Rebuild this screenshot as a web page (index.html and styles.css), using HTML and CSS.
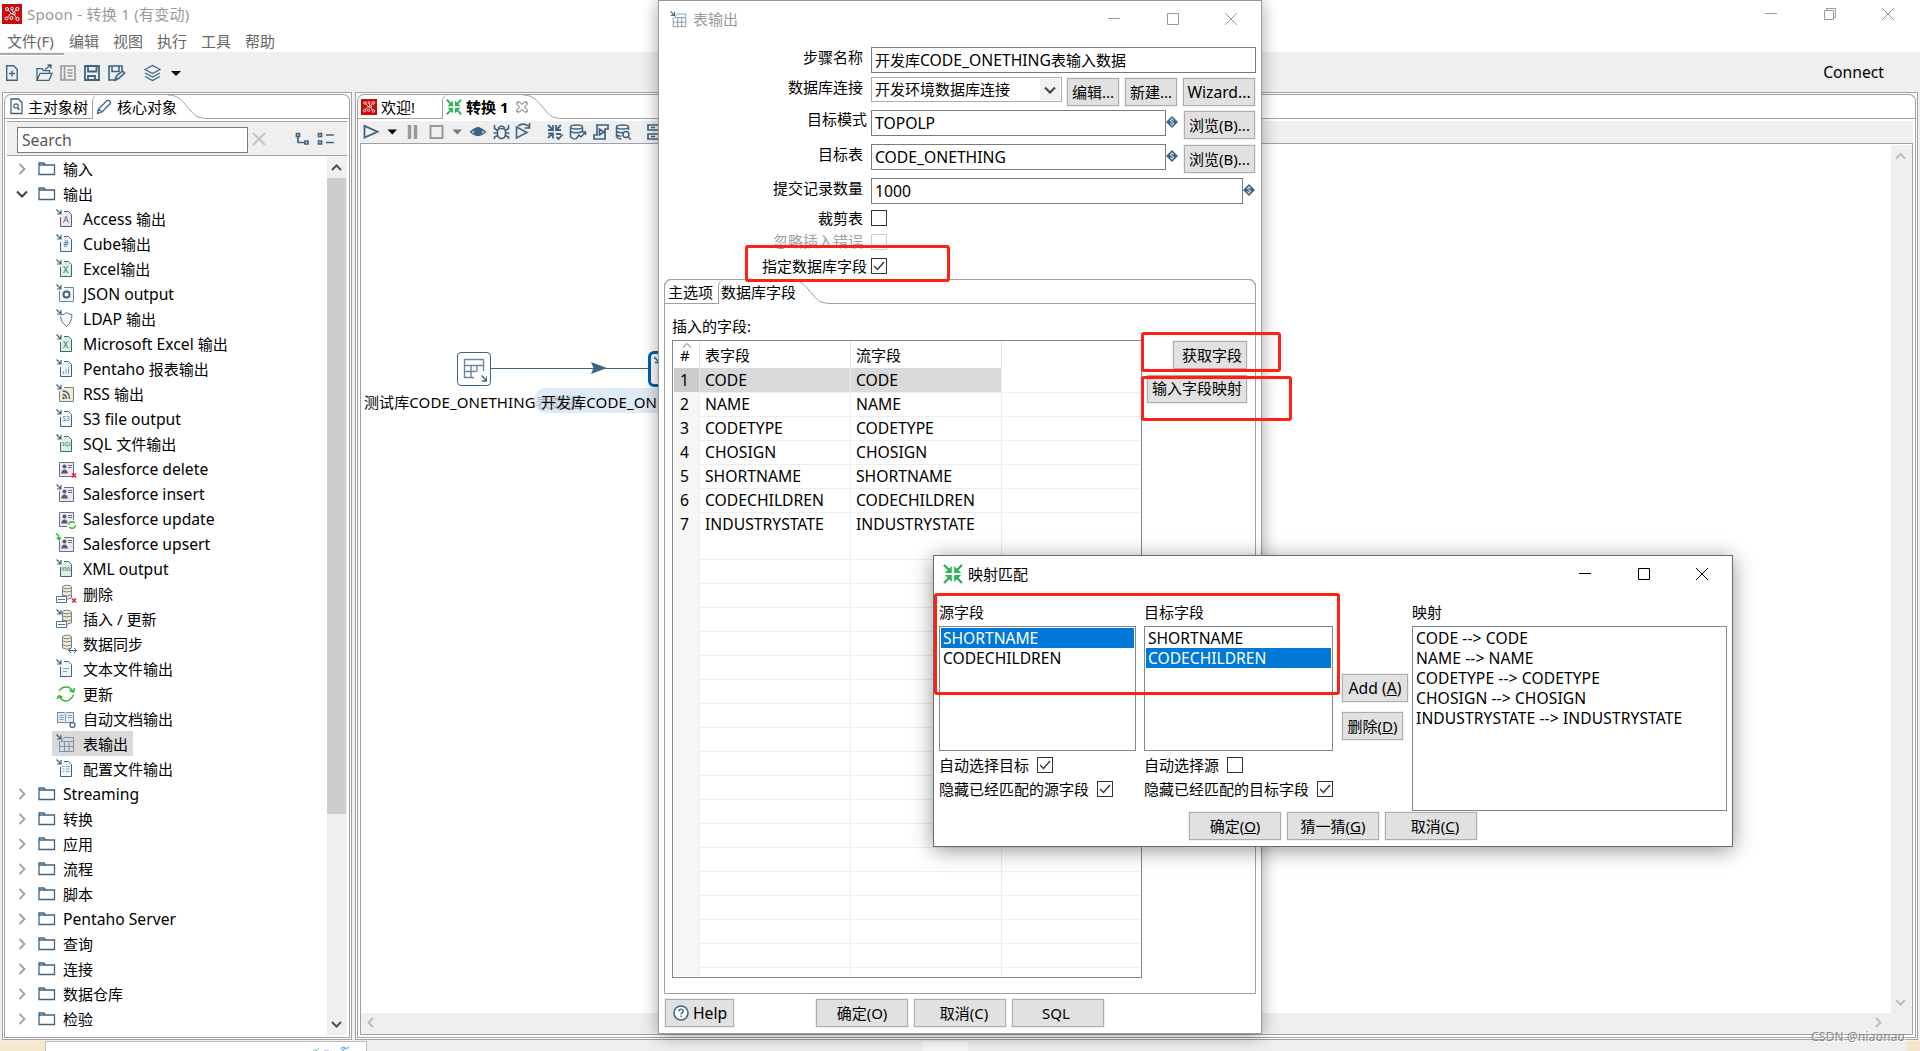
FILE: index.html
```
<!DOCTYPE html>
<html lang="zh-CN">
<head>
    <meta charset="UTF-8">
    <title>Spoon - 转换 1 (有变动)</title>
    <link rel="stylesheet" href="styles.css">
</head>
<body>
    <!-- Icon set -->
    <svg class="defs" width="0" height="0">
        <symbol id="logo" viewBox="0 0 20 20">
            <rect width="20" height="20" fill="#cc0a0a"/>
            <g fill="none" stroke="#fff" stroke-width="1"><circle cx="5" cy="5" r="1.5"/><circle cx="10" cy="4.5" r="1.3"/><circle cx="15.3" cy="5" r="1.6"/><circle cx="4.5" cy="14.5" r="1.5"/><circle cx="15.5" cy="15" r="1.6"/><circle cx="9.5" cy="14" r="1.5"/><circle cx="12" cy="9.5" r="1.3"/><path d="M6 6l4 4M10 6l1.5 2.500M14 6l-2 2.500M5.500 13.500l3-4 3 .5M14.500 14l-2-3"/></g>
        </symbol>
        <symbol id="trans" viewBox="0 0 20 20">
            <g stroke="#2fb457" stroke-width="2.400" fill="#2fb457"><path d="M1 1l6 6M19 1l-6 6M1 19l6-6M19 19l-6-6"/><path stroke="none" d="M8.800 2v7H1.800zM11.200 2v7h7zM8.800 18v-7H1.800zM11.200 18v-7h7z"/></g>
        </symbol>
        <symbol id="folder" viewBox="0 0 18 14"><path d="M1 2.500V1h5l1.500 2M1 1v11.500h15.500V3H1" stroke="#3d6482" stroke-width="1.300" fill="none"/></symbol>
        <symbol id="right" viewBox="0 0 8 12"><path d="M1.500 1L6.500 6l-5 5" stroke="#a0a0a0" stroke-width="1.800" fill="none"/></symbol>
        <symbol id="down" viewBox="0 0 12 8"><path d="M1 1.500l5 5 5-5" stroke="#404040" stroke-width="2" fill="none"/></symbol>
        <symbol id="arr" viewBox="0 0 22 22"><path d="M0.500 1.500l4 4M5 2v4H1" stroke="#3d6482" stroke-width="1.200" fill="none"/></symbol>
        <symbol id="doc" viewBox="0 0 22 22"><path d="M4.500 9v9.500h11V6.500l-3-3H8" stroke="#3d6482"/></symbol>
        <symbol id="card" viewBox="0 0 22 22"><path d="M3.500 8v10.500h14v-14H8" stroke="#54768f" fill="#fbe3e6"/><circle cx="8.500" cy="8.500" r="2" fill="#3d6482"/><path d="M5 15.500q1-4 3.500-4t3.500 4z" fill="#3d6482"/><path d="M12 7.500h4M12 9.500h4" stroke="#54768f"/></symbol>
        <symbol id="db" viewBox="0 0 22 22"><path d="M6.500 4v11q4.500 2.500 9 0V4" fill="#fce8cb" stroke="#6b879c"/><ellipse cx="11" cy="4" rx="4.500" ry="1.800" fill="#fce8cb" stroke="#6b879c"/><path d="M6.500 8q4.500 2 9 0M6.500 12q4.500 2 9 0" fill="none" stroke="#6b879c"/></symbol>
        <symbol id="rows" viewBox="0 0 22 22"><path d="M.5 13.500h10v6H.5zM2 16.500h7" fill="#fff" stroke="#54768f"/></symbol>
        <symbol id="del" viewBox="0 0 22 22"><path d="M16 15.500l4 4M20 15.500l-4 4" stroke="#e8174b" stroke-width="1.500"/></symbol>
        <symbol id="grid" viewBox="0 0 22 22"><path d="M3.500 8.500v10h14v-14H8l-3 4h12.500M3.500 13.500h14M8.500 8.500v10M13 8.500v10" fill="none" stroke="#7b93a6"/></symbol>
        <symbol id="var" viewBox="0 0 12 12"><path d="M6 0l6 6-6 6-6-6z" fill="#3d6482"/><path d="M7.800 4.300Q6 3 4.800 4T6 6t1.200 2T4.200 7.700M6 2.300v1.200M6 8.500v1.200" stroke="#fff" fill="none" stroke-width=".9"/></symbol>
        <symbol id="check" viewBox="0 0 14 14"><path d="M2 7l3.500 3.500L12 3" stroke="#333" stroke-width="1.400" fill="none"/></symbol>
        <symbol id="min" viewBox="0 0 12 12"><path d="M0 5.500h12" stroke="currentColor"/></symbol>
        <symbol id="max" viewBox="0 0 12 12"><path d="M.5.5h11v11H.5z" stroke="currentColor" fill="none"/></symbol>
        <symbol id="close" viewBox="0 0 12 12"><path d="M0 0l12 12M12 0L0 12" stroke="currentColor"/></symbol>
        <symbol id="curve" viewBox="0 0 36 24"><path d="M0 .5C10 .5 14 6 20 13S28 23.500 36 23.500" stroke="#a0a0a0" fill="none"/></symbol>
    </svg>

    <div class="titlebar">
        <svg width="20" height="20"><use href="#logo"/></svg>
        <span class="title">Spoon - 转换 1 (有变动)</span>
        <div class="winbtns">
            <svg width="12" height="12"><use href="#min"/></svg>
            <svg width="12" height="12"><path d="M.5 2.500h9v9h-9zM2.500 2V.5h9v9H10" stroke="currentColor" fill="none"/></svg>
            <svg width="12" height="12"><use href="#close"/></svg>
        </div>
    </div>
    <div class="menubar">
        <span class="file">文件(F)</span><span>编辑</span><span>视图</span><span>执行</span><span>工具</span><span>帮助</span>
    </div>
    <div class="toolbar">
        <svg class="ic" width="180" height="18">
            <path d="M.7 1.700h7l3.500 3.500v11H.7zM6 6.500v6M3 9.500h6" stroke-width="1.400"/>
            <path d="M31 16.300V4.700h5l1.500 2h6v2.500M31 16.300l3-7h12l-3 7zM39 5.500l6-4.500M41.500 1H45v3.500" stroke-width="1.300"/>
            <path d="M55 2h14v14H55zM58.500 2v14M61.500 6h5M61.500 9h5M61.500 12h5" stroke="#999" stroke-width="1.600"/>
            <path d="M79 2h14v14H79zM82 2v5.500h8.500V2M82 16v-4h7v4" stroke-width="1.800"/>
            <path d="M111 16h-8V2h13v6M106 2v5.500h7V2M109 16l1.500-4 6-5 2 2-6 5.500z" stroke-width="1.600"/>
            <path d="M139 5.500l7.500-4 7.500 4-7.500 4zM139 9l7.500 4 7.500-4M139 12.500l7.500 4 7.500-4" stroke-width="1.200"/>
            <path d="M165 7h10l-5 5z" fill="#000" stroke="none"/>
        </svg>
        <span class="connect en">Connect</span>
    </div>

    <div class="workspace">
        <div class="panel side">
            <div class="tabs">
                <div class="tab t-tree"><svg class="ic" width="14" height="17"><path d="M1 1h7.500L12 4.500V15.500H1z" stroke-width="1.300"/><circle cx="6" cy="8" r="2.200" stroke-width="1.200"/><path d="M7.500 9.500l2 2.500" stroke-width="1.300"/></svg>主对象树</div>
                <div class="tab active"><svg class="ic" width="16" height="16"><path d="M1.500 14.500l1-4.500 8.500-8.500q2-.5 3 .8 1 1.200.3 2.200L6 13zM2.500 10L6 13" stroke-width="1.300"/></svg>核心对象</div>
                <svg class="curve" width="36" height="24"><use href="#curve"/></svg>
                <div class="fill"></div>
            </div>
            <div class="pane">
                <div class="search">
                    <div class="searchbox">Search</div>
                    <svg width="14" height="14"><path d="M1 1l12 12M13 1L1 13" stroke="#c4c4c4" stroke-width="2"/></svg>
                    <svg class="ic expand" width="40" height="14"><path d="M1.500 1.500h3v3h-3zM10 9h3v3h-3zM3 5v5.500h6.500" stroke-width="1.700"/><path d="M23.500 1.500h3v3h-3zM23.500 9h3v3h-3zM31 3h8M31 10.500h8" stroke-width="1.700"/></svg>
                </div>
                <div class="tree-wrap">
                    <div class="tree">
                        <div class="folder"><svg class="tw" width="8" height="12"><use href="#right"/></svg><svg width="18" height="14"><use href="#folder"/></svg>输入</div>
                        <div class="folder open"><svg class="tw" width="12" height="8"><use href="#down"/></svg><svg width="18" height="14"><use href="#folder"/></svg>输出</div>
                        <div class="leaf"><svg width="22" height="22"><use href="#arr"/><use href="#doc" fill="#fbe3e6"/><text x="7" y="15">A</text></svg><span class="en">Access&nbsp;</span>输出</div>
                        <div class="leaf"><svg width="22" height="22"><use href="#arr"/><use href="#doc" fill="#eef6fb"/><text x="7" y="14">#</text></svg><span class="en">Cube</span>输出</div>
                        <div class="leaf"><svg width="22" height="22"><use href="#arr"/><use href="#doc" fill="#d9f2d9"/><text x="7" y="15">X</text></svg><span class="en">Excel</span>输出</div>
                        <div class="leaf"><svg width="22" height="22"><use href="#arr"/><path d="M3.500 8v10.500h14v-14H8" stroke="#6b879c" fill="#eef6fb"/><circle cx="10.500" cy="11.500" r="3" stroke="#3d6482" stroke-width="2" fill="#fff"/></svg><span class="en">JSON output</span></div>
                        <div class="leaf"><svg width="22" height="22"><use href="#arr"/><path d="M4.500 7q4 0 6-2.500 2.500 2 5.500 2-.5 9-5.500 12-6-4-6-10" stroke="#54768f" fill="#f5fafd"/></svg><span class="en">LDAP&nbsp;</span>输出</div>
                        <div class="leaf"><svg width="22" height="22"><use href="#arr"/><use href="#doc" fill="#d9f2d9"/><text x="7" y="15">X</text></svg><span class="en">Microsoft Excel&nbsp;</span>输出</div>
                        <div class="leaf"><svg width="22" height="22"><use href="#arr"/><use href="#doc" fill="#eef6fb"/><path d="M7.500 16v-3M10 16v-5M12.500 16v-7" stroke="#8aa3b5"/></svg><span class="en">Pentaho&nbsp;</span>报表输出</div>
                        <div class="leaf"><svg width="22" height="22"><use href="#arr"/><path d="M3.500 8v10.500h14v-14H8" stroke="#6b879c" fill="#fce8cb"/><path d="M6.500 8q7 0 7 8M6.500 11.500q4 0 4 4.500" stroke="#3d6482" stroke-width="1.400" fill="none"/><circle cx="7.500" cy="15" r="1.200" fill="#3d6482"/></svg><span class="en">RSS&nbsp;</span>输出</div>
                        <div class="leaf"><svg width="22" height="22"><use href="#arr"/><use href="#doc" fill="#f5fafd"/><text class="tiny" x="6.500" y="13">S3</text></svg><span class="en">S3 file output</span></div>
                        <div class="leaf"><svg width="22" height="22"><use href="#arr"/><use href="#doc" fill="#d9f2d9"/><text class="mini" x="6" y="13">SQL</text></svg><span class="en">SQL&nbsp;</span>文件输出</div>
                        <div class="leaf"><svg width="22" height="22"><use href="#card"/><path d="M3.500 8V4.500H8" stroke="#54768f" fill="none"/><use href="#del"/></svg><span class="en">Salesforce delete</span></div>
                        <div class="leaf"><svg width="22" height="22"><use href="#arr"/><use href="#card"/></svg><span class="en">Salesforce insert</span></div>
                        <div class="leaf"><svg width="22" height="22"><use href="#card"/><path d="M3.500 8V4.500H8" stroke="#54768f" fill="none"/><circle cx="16" cy="17" r="5" fill="#fff"/><circle cx="16" cy="17" r="3.300" stroke="#2fb82f" stroke-width="1.400" stroke-dasharray="8 2.300" fill="none"/></svg><span class="en">Salesforce update</span></div>
                        <div class="leaf"><svg width="22" height="22"><path d="M0 1q3 .5 3 5M.8 4.500L3 7l2-2.500" stroke="#2fb82f" stroke-width="1.400" fill="none"/><use href="#card"/></svg><span class="en">Salesforce upsert</span></div>
                        <div class="leaf"><svg width="22" height="22"><use href="#arr"/><use href="#doc" fill="#d9f2d9"/><text class="mini" x="5.500" y="13">XML</text></svg><span class="en">XML output</span></div>
                        <div class="leaf"><svg width="22" height="22"><use href="#db"/><use href="#rows"/><use href="#del"/></svg>删除</div>
                        <div class="leaf"><svg width="22" height="22"><use href="#arr"/><use href="#db"/><use href="#rows"/></svg>插入 / 更新</div>
                        <div class="leaf"><svg width="22" height="22"><use href="#db"/><path d="M13 17.500h7M15 15l-2.500 2.500L15 20M18 15l2.500 2.500L18 20" stroke="#3d6482" fill="none"/></svg>数据同步</div>
                        <div class="leaf"><svg width="22" height="22"><use href="#arr"/><use href="#doc" fill="#f0f7fb"/><path d="M7 10.500h6M7 13.500h4" stroke="#8aa3b5"/></svg>文本文件输出</div>
                        <div class="leaf"><svg width="22" height="22"><path d="M3 8Q6 3.500 11 4q4 .5 6 5M17.500 12q-3 6-8 6-4.500-.5-6.500-5M13.500 7.500l4 1.500 1-4M6.500 14.500L3 12.500 1 16" stroke="#2fb82f" stroke-width="1.500" fill="none"/></svg>更新</div>
                        <div class="leaf"><svg width="22" height="22"><path d="M1.500 4.500h7l1 1 1-1h7v10h-7l-1 1-1-1h-7z" fill="#e3ecf2" stroke="#6b879c"/><path d="M9.500 5v10M3.500 7.500h4M3.500 9.500h4M3.500 11.500h4M12 7.500h4M12 9.500h4" stroke="#8aa3b5"/><circle cx="16.500" cy="17" r="2.500" stroke="#54768f" stroke-width="1.400" fill="#fff"/></svg>自动文档输出</div>
                        <div class="leaf selected"><svg width="22" height="22"><use href="#arr"/><use href="#grid"/></svg>表输出</div>
                        <div class="leaf"><svg width="22" height="22"><use href="#arr"/><use href="#doc" fill="#f0f7fb"/><path d="M6.500 8.500h2M6.500 11h2M6.500 13.500h2M10 8.500h3.500M10 11h3.500M10 13.500h3.500" stroke="#8aa3b5"/></svg>配置文件输出</div>
                        <div class="folder"><svg class="tw" width="8" height="12"><use href="#right"/></svg><svg width="18" height="14"><use href="#folder"/></svg><span class="en">Streaming</span></div>
                        <div class="folder"><svg class="tw" width="8" height="12"><use href="#right"/></svg><svg width="18" height="14"><use href="#folder"/></svg>转换</div>
                        <div class="folder"><svg class="tw" width="8" height="12"><use href="#right"/></svg><svg width="18" height="14"><use href="#folder"/></svg>应用</div>
                        <div class="folder"><svg class="tw" width="8" height="12"><use href="#right"/></svg><svg width="18" height="14"><use href="#folder"/></svg>流程</div>
                        <div class="folder"><svg class="tw" width="8" height="12"><use href="#right"/></svg><svg width="18" height="14"><use href="#folder"/></svg>脚本</div>
                        <div class="folder"><svg class="tw" width="8" height="12"><use href="#right"/></svg><svg width="18" height="14"><use href="#folder"/></svg><span class="en">Pentaho Server</span></div>
                        <div class="folder"><svg class="tw" width="8" height="12"><use href="#right"/></svg><svg width="18" height="14"><use href="#folder"/></svg>查询</div>
                        <div class="folder"><svg class="tw" width="8" height="12"><use href="#right"/></svg><svg width="18" height="14"><use href="#folder"/></svg>连接</div>
                        <div class="folder"><svg class="tw" width="8" height="12"><use href="#right"/></svg><svg width="18" height="14"><use href="#folder"/></svg>数据仓库</div>
                        <div class="folder"><svg class="tw" width="8" height="12"><use href="#right"/></svg><svg width="18" height="14"><use href="#folder"/></svg>检验</div>
                    </div>
                    <div class="vscroll">
                        <svg width="19" height="21"><path d="M5 13l4.500-4.500L14 13" stroke="#505050" stroke-width="2" fill="none"/></svg>
                        <div class="thumb"></div>
                        <svg width="19" height="21"><path d="M5 8l4.500 4.500L14 8" stroke="#505050" stroke-width="2" fill="none"/></svg>
                    </div>
                </div>
            </div>
        </div>

        <div class="panel main">
            <div class="tabs">
                <div class="tab t-welcome"><svg width="16" height="16"><use href="#logo"/></svg>欢迎!</div>
                <div class="tab active t-trans"><svg width="16" height="16"><use href="#trans"/></svg><b>转换 1</b><svg class="tabx" width="12" height="12"><path d="M1 1h2.500L6 3.500 8.500 1H11v2.500L8.500 6 11 8.500V11H8.500L6 8.500 3.500 11H1V8.500L3.500 6 1 3.500z" stroke="#666" fill="#fff"/></svg></div>
                <svg class="curve" width="36" height="24"><use href="#curve"/></svg>
                <div class="fill"></div>
            </div>
            <div class="pane">
                <div class="runbar">
                    <svg class="ic" width="310" height="20">
                        <path d="M4.500 4v11.500L17.500 9.800z" stroke-width="1.800"/>
                        <path d="M27.500 7.500h9.500l-4.700 5z" fill="#000" stroke="none"/>
                        <path d="M49.500 3v14M55.500 3v14" stroke="#999" stroke-width="3.500"/>
                        <path d="M70.500 4h12v12h-12z" stroke="#999" stroke-width="2"/>
                        <path d="M92.500 7.500h9.500l-4.700 5z" fill="#777" stroke="none"/>
                        <path d="M110.500 10Q118 2.500 125.500 10 118 17 110.500 10z" stroke-width="1.300"/><circle cx="118" cy="9.500" r="4" fill="#3d6482"/>
                        <path d="M137.500 8q4-3 8 0v4.500q-.5 4-4 4t-4-4zM138 6.500q3.500-5 7 0M134.500 3v3.500l3 2M148.500 3v3.500l-3 2M133.500 11h4M149.500 11h-4M134.500 17v-2l3-1.500M148.500 17v-2l-3-1.500" stroke-width="1.600"/>
                        <path d="M156.500 5v11L167 10.500zM158 4q6-4 11 .500M169.500 1v5h-5" stroke-width="1.600"/>
                        <path d="M188 3l4 4M201 3l-4 4M188 16l4-4M193 3v5h-5M196 3v5h5M193 16.500v-5h-5M196 12h5M196.500 15l2 2 4-4.500" stroke-width="1.800"/>
                        <path d="M210.500 5v10q2.500 2 5 2M210.500 5q0-2 6-2t6 2-6 2-6-2M210.500 9.500q5 2.500 12 0M222.500 5v5M216 17l3-4 2 2 4.500-5M222 10h3.500v3" stroke-width="1.500"/>
                        <path d="M236 3h12v4h-3v10h-11v-4h3V3M239.500 7v6l4.500-3z" stroke-width="1.700"/>
                        <path d="M256.500 5v10q2.500 2 5 2M256.500 5q0-2 6-2t6 2-6 2-6-2M256.500 9.500q4 2 7 1M256.500 13q3 1.500 5 1M268.500 5v3" stroke-width="1.500"/><circle cx="266" cy="12.500" r="3" stroke-width="1.500"/><path d="M268 15l3 2.500" stroke-width="1.600"/>
                        <path d="M288 3h20v5h-20zM288 12h20v5h-20zM291 5.500h4M298 5.500h8M291 14.500h4M298 14.500h8" stroke-width="1.700"/>
                    </svg>
                </div>
                <div class="canvas">
                    <div class="canvas-row">
                        <div class="graph">
                            <svg class="hop" width="158" height="16"><path d="M0 8.500h158" stroke="#3d6482"/><path d="M100 2l16 6-16 6 2.500-6z" fill="#3d6482"/></svg>
                            <div class="node n1"><svg width="26" height="26"><path d="M13 21.500H3.500v-18h19V15M3.500 9.500h19M3.500 15.500h12M10 9.500v12M16 9.500v6" stroke="#6b879c" stroke-width="1.400" fill="none"/><path d="M20.500 19.500l5 5M26 20v5h-5" stroke="#3d6482" stroke-width="1.500" fill="none"/></svg></div>
                            <div class="node n2"><svg width="26" height="26"><path d="M1 1l5 5M7 1.500v5H2" stroke="#3d6482" stroke-width="1.500" fill="none"/><path d="M5.500 12v11h18V8H9" stroke="#6b879c" stroke-width="1.400" fill="none"/></svg></div>
                            <div class="nlabel l1">测试库CODE_ONETHING表数据</div>
                            <div class="nlabel l2">开发库CODE_ONETHING表输入数据</div>
                        </div>
                        <div class="cscroll">
                            <svg width="19" height="21"><path d="M5 13.500L9.500 9l4.500 4.500" stroke="#bdbdbd" stroke-width="2" fill="none"/></svg>
                            <svg width="19" height="21"><path d="M5 8l4.500 4.500L14 8" stroke="#bdbdbd" stroke-width="2" fill="none"/></svg>
                        </div>
                    </div>
                    <div class="hscroll">
                        <svg width="20" height="19"><path d="M12 5L7.500 9.500 12 14" stroke="#bdbdbd" stroke-width="2" fill="none"/></svg>
                        <svg width="20" height="19"><path d="M7 5l4.500 4.500L7 14" stroke="#bdbdbd" stroke-width="2" fill="none"/></svg>
                    </div>
                </div>
            </div>
        </div>
    </div>
    <div class="desktop">
        <div class="d-left"></div>
        <div class="d-task"><svg width="40" height="6"><path d="M1 5l2-2 1 2 3-3" stroke="#84c99a" fill="none"/><path d="M12 5h5" stroke="#c8c4ee" stroke-width="2"/><path d="M29 3q2-3 4-1l-3 4M34 3l3-2" stroke="#6fb8ee" fill="none" stroke-width="1.500"/></svg></div>
        <div class="d-mid"></div>
        <div class="d-hot"></div>
        <div class="d-rest"></div>
        <div class="d-end"></div>
    </div>

    <!-- Table output dialog -->
    <div class="dialog output">
        <div class="dlg-title inactive">
            <svg width="18" height="18" viewBox="0 0 20 20"><use href="#arr" width="22" height="22"/><use href="#grid" width="22" height="22"/></svg>
            <span>表输出</span>
            <div class="winbtns"><svg width="12" height="12"><use href="#min"/></svg><svg width="12" height="12"><use href="#max"/></svg><svg width="12" height="12"><use href="#close"/></svg></div>
        </div>
        <div class="row r1"><label>步骤名称</label><div class="input w-full">开发库<span class="en">CODE_ONETHING</span>表输入数据</div></div>
        <div class="row r2"><label>数据库连接</label><div class="combo"><span>开发环境数据库连接</span><i><svg width="12" height="8"><use href="#down"/></svg></i></div><button class="b-edit">编辑...</button><button class="b-edit">新建...</button><button class="b-wiz en">Wizard...</button></div>
        <div class="row r3"><label class="wide">目标模式</label><div class="input w-short en">TOPOLP</div><svg class="var" width="12" height="12"><use href="#var"/></svg><button class="b-browse">浏览(B)...</button></div>
        <div class="row r4"><label>目标表</label><div class="input w-short en">CODE_ONETHING</div><svg class="var" width="12" height="12"><use href="#var"/></svg><button class="b-browse">浏览(B)...</button></div>
        <div class="row r5"><label>提交记录数量</label><div class="input w-long en">1000</div><svg class="var" width="12" height="12"><use href="#var"/></svg></div>
        <div class="row rc"><label>裁剪表</label><div class="cb"></div></div>
        <div class="row rc off"><label>忽略插入错误</label><div class="cb"></div></div>
        <div class="row rc last"><label class="wide">指定数据库字段</label><div class="cb"><svg width="14" height="14"><use href="#check"/></svg></div></div>
        <div class="folder-box">
            <div class="tabs">
                <div class="tab t-main">主选项</div>
                <div class="tab active t-db">数据库字段</div>
                <svg class="curve" width="36" height="24"><use href="#curve"/></svg>
                <div class="fill"></div>
            </div>
            <div class="ins-label">插入的字段:</div>
            <div class="fields">
                <div class="table">
                    <div class="thead"><span class="num"><svg width="10" height="5"><path d="M1 4.500l4-4 4 4" stroke="#666" fill="none"/></svg>#</span><span>表字段</span><span>流字段</span><span></span></div>
                    <div class="tr sel"><span class="num">1</span><span>CODE</span><span>CODE</span><span></span></div>
                    <div class="tr"><span class="num">2</span><span>NAME</span><span>NAME</span><span></span></div>
                    <div class="tr"><span class="num">3</span><span>CODETYPE</span><span>CODETYPE</span><span></span></div>
                    <div class="tr"><span class="num">4</span><span>CHOSIGN</span><span>CHOSIGN</span><span></span></div>
                    <div class="tr"><span class="num">5</span><span>SHORTNAME</span><span>SHORTNAME</span><span></span></div>
                    <div class="tr"><span class="num">6</span><span>CODECHILDREN</span><span>CODECHILDREN</span><span></span></div>
                    <div class="tr"><span class="num">7</span><span>INDUSTRYSTATE</span><span>INDUSTRYSTATE</span><span></span></div>
                    <div class="tr empty"><span class="num"></span><span></span><span></span><span></span></div>
                </div>
                <div class="sidebtns">
                    <button class="b-get">获取字段</button>
                    <button class="b-map">输入字段映射</button>
                </div>
            </div>
        </div>
        <div class="footer">
            <button class="b-help en"><svg width="16" height="16"><circle cx="8" cy="8" r="7" stroke="#3d6482" stroke-width="1.500" fill="#fff"/><path d="M5.800 6.500q0-2.300 2.200-2.300t2.200 2q0 1-1.200 1.600T8 9.300M8 10.500v1.500" stroke="#3d6482" stroke-width="1.300" fill="none"/></svg>Help</button>
            <button>确定(O)</button><button class="shift">取消(C)</button><button class="b-sql">SQL</button>
        </div>
    </div>

    <div class="mark m1"></div>
    <div class="mark m2"></div>
    <div class="mark m3"></div>

    <!-- Mapping dialog -->
    <div class="dialog mapping">
        <div class="dlg-title">
            <svg width="20" height="20"><use href="#trans"/></svg>
            <span>映射匹配</span>
            <div class="winbtns"><svg width="12" height="12"><use href="#min"/></svg><svg width="12" height="12"><use href="#max"/></svg><svg width="12" height="12"><use href="#close"/></svg></div>
        </div>
        <div class="map-body">
            <div class="col c-src">
                <div class="cap">源字段</div>
                <div class="list"><div class="on">SHORTNAME</div><div>CODECHILDREN</div></div>
                <div class="opt"><span>自动选择目标</span><div class="cb"><svg width="14" height="14"><use href="#check"/></svg></div></div>
                <div class="opt"><span>隐藏已经匹配的源字段</span><div class="cb"><svg width="14" height="14"><use href="#check"/></svg></div></div>
            </div>
            <div class="col c-dst">
                <div class="cap">目标字段</div>
                <div class="list"><div>SHORTNAME</div><div class="on">CODECHILDREN</div></div>
                <div class="opt"><span>自动选择源</span><div class="cb"></div></div>
                <div class="opt"><span>隐藏已经匹配的目标字段</span><div class="cb"><svg width="14" height="14"><use href="#check"/></svg></div></div>
            </div>
            <div class="col c-btn">
                <button class="b-add en">Add (<u>A</u>)</button>
                <button class="b-del">删除(<u>D</u>)</button>
            </div>
            <div class="col c-map">
                <div class="cap">映射</div>
                <div class="list tall"><div>CODE --&gt; CODE</div><div>NAME --&gt; NAME</div><div>CODETYPE --&gt; CODETYPE</div><div>CHOSIGN --&gt; CHOSIGN</div><div>INDUSTRYSTATE --&gt; INDUSTRYSTATE</div></div>
            </div>
        </div>
        <div class="map-foot">
            <button>确定(<u>O</u>)</button><button>猜一猜(<u>G</u>)</button><button class="shift">取消(<u>C</u>)</button>
        </div>
    </div>
    <div class="mark m4"></div>
    <div class="watermark">CSDN @niaonao</div>
</body>
</html>
```
FILE: styles.css
```
* {
    box-sizing: border-box;
}
body {
    margin: 0;
    width: 1920px;
    height: 1051px;
    overflow: hidden;
    position: relative;
    background: #efefef;
    color: #000;
    font-family: "Noto Sans", "Noto Sans CJK SC", sans-serif;
    font-size: 15px;
    line-height: 20px;
    white-space: nowrap;
}
svg {
    display: block;
    flex: none;
}
.defs {
    position: absolute;
}
.ic {
    fill: none;
    stroke: #3d6482;
}
button {
    font: inherit;
    color: #000;
    padding: 0;
    height: 28px;
    background: #e1e1e1;
    border: 1px solid #adadad;
    box-shadow: 0 0 0 1px #f0f0f0;
    flex: none;
}
/* latin runs are a touch larger than the CJK text */
.en {
    font-size: 15.7px;
}

/* main window */
.titlebar {
    display: flex;
    align-items: center;
    height: 30px;
    padding-left: 2px;
    background: #fff;
    color: #999;
}
.titlebar > svg {
    margin-top: -2px;
}
.title {
    margin: -2px 0 0 5px;
    letter-spacing: .25px;
}
.winbtns {
    display: flex;
    gap: 46.5px;
    margin-left: auto;
}
.titlebar .winbtns {
    margin: -2px 26px 0 auto;
}
.menubar {
    display: flex;
    gap: 14px;
    height: 22px;
    padding: 1px 0 0 7px;
    background: #fff;
    color: #666;
}
.menubar .file {
    width: 48px;
}
.toolbar {
    display: flex;
    align-items: center;
    height: 40px;
    padding: 2px 36px 0 6px;
}
.toolbar::before {
    content: "";
    position: absolute;
    top: 53px;
    left: 0;
    width: 64px;
    height: 2px;
    background: #aaa;
    border-bottom: 1px solid #fff;
}
.connect {
    margin: -2px 0 0 auto;
}
.workspace {
    display: flex;
    gap: 3px;
    height: 948px;
    padding: 0 2px;
}
.panel {
    display: flex;
    flex-direction: column;
    background: #fff;
    border: 1px solid #a0a0a5;
    padding: 1px;
}
.side {
    width: 350px;
}
.main {
    flex: 1;
}
.pane {
    display: flex;
    flex-direction: column;
    flex: 1;
    padding: 2px;
    border: 1px solid #a0a0a5;
    border-top: 0;
}

/* tab strips */
.tabs {
    display: flex;
    height: 25px;
    flex: none;
    border: 1px solid #a0a0a0;
    border-bottom: 0;
    border-radius: 7px 7px 0 0;
}
.tab {
    display: flex;
    align-items: center;
    height: 24px;
    border-bottom: 1px solid #a0a0a0;
    padding: 0 0 0 5px;
}
.tab.active {
    border-bottom: 0;
    border-left: 1px solid #a0a0a0;
    border-radius: 6px 0 0 0;
    padding-left: 3px;
}
.fill {
    flex: 1;
    border-bottom: 1px solid #a0a0a0;
}
.curve {
    margin-top: -1px;
    height: 25px;
}
.t-tree {
    width: 87px;
    gap: 4px;
}
.t-tree + .active {
    width: 75px;
    gap: 5px;
}
.side .curve {
    margin-left: 1px;
}
.t-welcome {
    width: 84px;
    gap: 4px;
    padding-left: 3px;
}
.t-trans {
    width: 81px;
    gap: 4px;
}
.tabx {
    margin-left: 4px;
}

/* left panel */
.search {
    display: flex;
    align-items: center;
    height: 35px;
    flex: none;
    background: #efefef;
    border-top: 1px solid #a0a0a5;
    border-bottom: 1px solid #a0a0a5;
    padding-left: 10px;
}
.searchbox {
    width: 231px;
    height: 26px;
    padding-left: 4px;
    line-height: 25px;
    margin-top: 3px;
    font-size: 15.7px;
    color: #555;
    background: #fff;
    border: 1px solid #7a7a7a;
    margin-right: 4px;
}
.expand {
    margin-left: 29px;
}
.tree-wrap {
    display: flex;
    flex: 1;
    justify-content: space-between;
}
.folder,
.leaf {
    display: flex;
    align-items: center;
    height: 25px;
}
.folder {
    padding-left: 11px;
}
.folder.open {
    padding-left: 9px;
}
.tw {
    margin-right: 12px;
}
.open .tw {
    margin-right: 10px;
}
.folder svg + svg {
    margin-right: 7px;
}
.leaf {
    width: max-content;
    margin-left: 45px;
    padding: 0 5px 0 4px;
}
.leaf svg {
    margin-right: 5px;
}
.leaf text {
    font-size: 9px;
    fill: #3d6482;
}
.leaf .tiny {
    font-size: 6.5px;
}
.leaf .mini {
    font-size: 5px;
}
.leaf.selected {
    background: #d9d9d9;
}
.vscroll {
    display: flex;
    flex-direction: column;
    justify-content: space-between;
    width: 20px;
    margin-top: 1px;
    background: #f0f0f0;
}
.thumb {
    width: 19px;
    height: 636px;
    margin-bottom: auto;
    background: #cdcdcd;
}

/* canvas */
.runbar {
    height: 22px;
    padding-top: 1px;
    background: #efefef;
}
.canvas {
    display: flex;
    flex-direction: column;
    flex: 1;
    border: 1px solid #a0a0a5;
}
.canvas-row {
    display: flex;
    flex: 1;
}
.graph {
    position: relative;
    flex: 1;
}
.hop {
    position: absolute;
    left: 130px;
    top: 216px;
}
.node {
    position: absolute;
    top: 208px;
    width: 34px;
    height: 34px;
    background: #fff;
    border: 1px solid #3d6482;
    border-radius: 4px;
    padding: 3px;
}
.n1 {
    left: 96px;
}
.n2 {
    left: 287px;
    top: 207px;
    width: 36px;
    height: 36px;
    border: 3px solid #0061ae;
    border-radius: 6px;
    padding: 2px;
}
.nlabel {
    position: absolute;
    top: 244px;
    height: 25px;
    line-height: 28px;
    letter-spacing: .1px;
}
.l1 {
    left: 3px;
}
.l2 {
    left: 173px;
    padding: 0 7px;
    background: rgba(216, 229, 241, .8);
    border-radius: 12px;
}
.cscroll {
    display: flex;
    flex-direction: column;
    justify-content: space-between;
    width: 21px;
    background: #efefef;
    margin-top: 1px;
}
.hscroll {
    display: flex;
    justify-content: space-between;
    height: 21px;
    background: #efefef;
    padding-right: 23px;
}

/* strip under the window */
.desktop {
    display: flex;
    height: 10px;
    margin-top: 1px;
}
.d-left {
    width: 45px;
    background: #f5e8cb;
}
.d-task {
    width: 322px;
    background: #fff;
    border: 1px solid #bbb;
    border-bottom: 0;
    padding: 4px 0 0 266px;
}
.d-mid {
    width: 556px;
}
.d-hot {
    width: 45px;
    background: #f7f7f7;
}
.d-rest {
    flex: 1;
}
.d-end {
    width: 14px;
    background: #f3e6cc;
}

/* dialogs */
.dialog {
    position: absolute;
    background: #fff;
}
.output {
    left: 658px;
    top: 0;
    width: 604px;
    height: 1034px;
    border: 1px solid #9c9c9c;
    box-shadow: 0 2px 16px rgba(0, 0, 0, .36);
}
.dlg-title {
    display: flex;
    align-items: center;
}
.inactive {
    color: #999;
    height: 46px;
    padding: 0 24px 10px 11px;
}
.inactive > span {
    margin-left: 5px;
}
.row {
    display: flex;
    align-items: flex-start;
}
.row label {
    width: 204px;
    margin-right: 8px;
    text-align: right;
    line-height: 20px;
    flex: none;
}
.row label.wide {
    width: 208px;
    margin-right: 4px;
}
.r1 {
    height: 30px;
}
.r2 {
    height: 33px;
}
.r3,
.r4 {
    height: 34px;
}
.r5 {
    height: 32px;
}
.rc {
    height: 24px;
}
.rc.last {
    height: 22px;
}
.rc label {
    line-height: 17px;
}
.r3 label {
    line-height: 19px;
}
.input {
    height: 26px;
    padding-left: 3px;
    line-height: 24px;
    border: 1px solid #7a7a7a;
    flex: none;
}
.w-full {
    width: 385px;
}
.w-short {
    width: 295px;
}
.w-long {
    width: 372px;
}
.combo {
    display: flex;
    justify-content: space-between;
    width: 191px;
    height: 25px;
    padding: 1px 1px 1px 3px;
    line-height: 21px;
    border: 1px solid #adadad;
    margin-right: 5px;
}
.combo i {
    display: flex;
    align-items: center;
    justify-content: center;
    width: 20px;
    background: #f0f0f0;
}
.r2 button,
.r3 button,
.r4 button {
    margin-top: 1px;
}
.b-edit {
    width: 52px;
    margin-right: 6px;
}
.b-wiz {
    width: 72px;
}
.var {
    margin-top: 6px;
}
.b-browse {
    width: 71px;
    margin-left: 6px;
}
.cb {
    width: 16px;
    height: 16px;
    border: 1px solid #333;
    background: #fff;
    flex: none;
}
.off {
    color: #a0a0a0;
}
.off label {
    line-height: 15px;
}
.off .cb {
    border-color: #ccc;
}
.folder-box {
    width: 592px;
    height: 715px;
    margin: -1px 0 0 5px;
    border: 1px solid #a0a0a0;
    border-radius: 7px 7px 0 0;
}
.folder-box .tabs {
    margin: -1px -1px 0;
}
.t-main {
    width: 53px;
    padding-left: 3px;
}
.tab.t-db {
    width: 73px;
    padding-left: 2px;
}
.ins-label {
    padding: 12px 0 0 7px;
    height: 36px;
}
.fields {
    display: flex;
    padding-left: 7px;
}
.table {
    display: flex;
    flex-direction: column;
    width: 470px;
    height: 638px;
    padding: 0 1px 1px;
    border: 1px solid #828790;
}
.thead,
.tr {
    display: grid;
    grid-template-columns: 26px 151px 151px 1fr;
}
.thead {
    height: 27px;
    line-height: 29px;
}
.thead > span {
    border-right: 1px solid #e3e3e3;
    padding-left: 5px;
}
.thead .num {
    position: relative;
}
.num svg {
    position: absolute;
    left: 8px;
    top: 2px;
}
.tr {
    height: 24px;
    line-height: 24px;
    font-size: 15.7px;
}
.tr > span {
    border-right: 1px solid #e6edf8;
    border-bottom: 1px solid #eee;
    padding-left: 5px;
}
.thead > span:last-child,
.tr > span:last-child {
    border-right: 0;
}
.tr .num,
.thead .num {
    padding-left: 6px;
}
.tr .num {
    background: #f6f6f6;
}
.sel > span {
    background: #d9d9d9;
}
.sel .num {
    background: #ccc;
}
.sel > span:last-child {
    background: #fff;
}
.tr.empty {
    flex: 1;
}
.tr.empty > span {
    border-bottom: 0;
    background: repeating-linear-gradient(#fff 0 23px, #eee 23px 24px);
}
.tr.empty .num {
    background: #f6f6f6;
}
.sidebtns {
    display: flex;
    flex-direction: column;
    align-items: flex-end;
    gap: 6px;
    width: 105px;
    padding-top: 1px;
}
.b-get {
    width: 74px;
    padding-left: 4px;
}
.b-map {
    width: 100px;
    padding-bottom: 2px;
}
.footer {
    display: flex;
    gap: 6px;
    padding: 5px 0 0 6px;
}
.footer button {
    width: 92px;
}
.footer .b-help {
    display: flex;
    align-items: center;
    gap: 4px;
    width: 69px;
    padding-left: 7px;
    margin-right: 76px;
}
.footer .shift {
    padding-left: 8px;
}
.footer .b-sql {
    padding-right: 4px;
}

.mapping {
    left: 933px;
    top: 555px;
    width: 800px;
    height: 292px;
    border: 1px solid #6b6b6b;
    box-shadow: 0 3px 20px rgba(0, 0, 0, .42);
}
.mapping .dlg-title {
    height: 46px;
    padding: 0 24px 10px 9px;
}
.mapping .dlg-title > span {
    margin-left: 5px;
}
.map-body {
    display: flex;
    height: 210px;
    padding-left: 5px;
}
.col {
    display: flex;
    flex-direction: column;
}
.c-src {
    width: 197px;
    margin-right: 8px;
}
.c-dst {
    width: 189px;
    margin-right: 9px;
}
.c-btn {
    width: 70px;
    padding-top: 72px;
    gap: 10px;
}
.c-map {
    width: 315px;
}
.cap {
    height: 24px;
    line-height: 20px;
}
.list {
    height: 125px;
    padding: 1px;
    border: 1px solid #828790;
    font-size: 15.6px;
    flex: none;
}
.list.tall {
    height: 185px;
}
.list > div {
    height: 20px;
    padding-left: 2px;
    line-height: 20px;
}
.list .on {
    color: #fff;
    background: #0078d7;
}
.tall {
    letter-spacing: .1px;
}
.opt {
    display: flex;
    align-items: center;
    gap: 8px;
    height: 24px;
}
.list + .opt {
    margin-top: 2px;
}
.b-add {
    width: 66px;
}
.b-del {
    width: 61px;
}
.map-foot {
    display: flex;
    gap: 6px;
    padding-left: 255px;
}
.map-foot button {
    width: 92px;
}
.map-foot .shift {
    padding-left: 8px;
}

/* red annotations */
.mark {
    position: absolute;
    border: 3px solid #ff2014;
    border-radius: 3px;
}
.m1 {
    left: 745px;
    top: 245px;
    width: 205px;
    height: 37px;
}
.m2 {
    left: 1141px;
    top: 332px;
    width: 140px;
    height: 40px;
}
.m3 {
    left: 1141px;
    top: 376px;
    width: 151px;
    height: 45px;
}
.m4 {
    left: 934px;
    top: 593px;
    width: 406px;
    height: 102px;
}
.watermark {
    position: absolute;
    right: 15px;
    bottom: 4px;
    font-size: 12px;
    color: #888;
    text-shadow: 1px 1px 0 #fff;
    letter-spacing: .15px;
}
```
